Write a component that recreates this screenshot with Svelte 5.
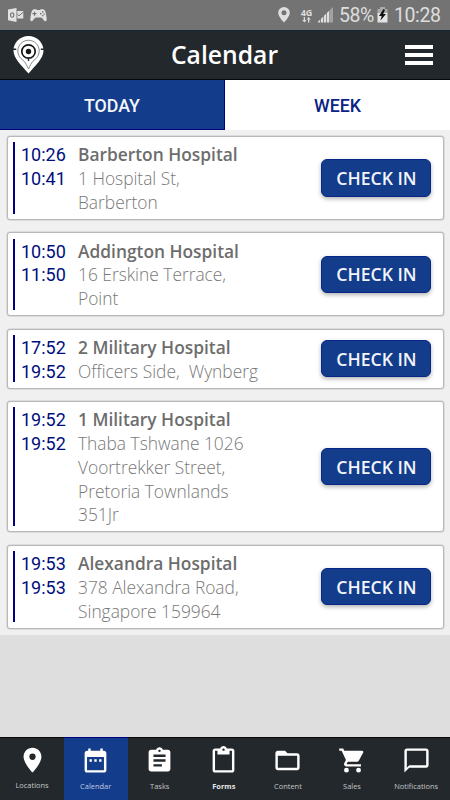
<script>
  const visits = [
    { from: '10:26', to: '10:41', name: 'Barberton Hospital', lines: ['1 Hospital St,', 'Barberton'] },
    { from: '10:50', to: '11:50', name: 'Addington Hospital', lines: ['16 Erskine Terrace,', 'Point'] },
    { from: '17:52', to: '19:52', name: '2 Military Hospital', lines: ['Officers Side,\u00a0 Wynberg'] },
    { from: '19:52', to: '19:52', name: '1 Military Hospital', lines: ['Thaba Tshwane 1026', 'Voortrekker Street,', 'Pretoria Townlands', '351Jr'] },
    { from: '19:53', to: '19:53', name: 'Alexandra Hospital', lines: ['378 Alexandra Road,', 'Singapore 159964'] }
  ];
  const nav = [
    { label: 'Locations', d: 'M12 1.500C7.900 1.500 4.600 4.800 4.600 8.900c0 5.300 7.400 13.100 7.400 13.100s7.400-7.800 7.400-13.100c0-4.100-3.300-7.400-7.400-7.400zm0 10a2.600 2.600 0 1 1 0-5.200 2.600 2.600 0 0 1 0 5.200z' },
    { label: 'Calendar', active: true, d: 'M9 11H7v2h2v-2zm4 0h-2v2h2v-2zm4 0h-2v2h2v-2zm2-7h-1V2h-2v2H8V2H6v2H5c-1.1 0-2 .9-2 2v14c0 1.1.9 2 2 2h14c1.1 0 2-.9 2-2V6c0-1.1-.9-2-2-2zm0 16H5V9h14v11z' },
    { label: 'Tasks', d: 'M19 3h-4.18C14.4 1.84 13.3 1 12 1s-2.4.84-2.82 2H5c-1.1 0-2 .9-2 2v14c0 1.1.9 2 2 2h14c1.1 0 2-.9 2-2V5c0-1.1-.9-2-2-2zm-7 0a1 1 0 1 1 0 2 1 1 0 0 1 0-2zm2 14H7v-2h7v2zm3-4H7v-2h10v2zm0-4H7V7h10v2z' },
    { label: 'Forms', bold: true, d: 'M19 2h-4.18C14.4.84 13.3 0 12 0S9.6.84 9.18 2H5c-1.1 0-2 .9-2 2v16c0 1.1.9 2 2 2h14c1.1 0 2-.9 2-2V4c0-1.1-.9-2-2-2zm-7 0a1 1 0 1 1 0 2 1 1 0 0 1 0-2zm7 18H5V4h2v3h10V4h2v16z' },
    { label: 'Content', d: 'M10 4H4c-1.1 0-2 .9-2 2v12c0 1.1.9 2 2 2h16c1.1 0 2-.9 2-2V8c0-1.1-.9-2-2-2h-8l-2-2zM20 18H4V8h16v10z' },
    { label: 'Sales', d: 'M7 18a2 2 0 1 0 0 4 2 2 0 0 0 0-4zM1 2v2h2l3.6 7.59-1.35 2.45C4.52 15.37 5.48 17 7 17h12v-2H7.42a.25.25 0 0 1-.25-.25l.93-1.75h7.45c.75 0 1.41-.41 1.75-1.03l3.58-6.49A1 1 0 0 0 20 4H5.21l-.94-2H1zm16 16a2 2 0 1 0 0 4 2 2 0 0 0 0-4z' },
    { label: 'Notifications', d: 'M20 2H4c-1.1 0-2 .9-2 2v18l4-4h14c1.1 0 2-.9 2-2V4c0-1.1-.9-2-2-2zm0 14H6l-2 2V4h16v12z' }
  ];
</script>

<div class="screen">
  <div class="status">
    <svg class="mail" width="16" height="14" viewBox="0 0 16 14" fill="#e2e2e2">
      <path fill-rule="evenodd" d="M0 1.6 8.5 0v14L0 12.2zM4.2 4.2C2.7 4.2 2 5.4 2 7s.8 2.8 2.2 2.8S6.4 8.600 6.400 7 5.600 4.200 4.200 4.200zm0 1.100c.7 0 1 .7 1 1.700s-.3 1.700-1 1.700-1-.7-1-1.700.3-1.700 1-1.700z" />
      <path d="M9.300 3h6v7.500h-6z" /><path d="M9.300 6.200 11 7.800 15.300 4" fill="none" stroke="#737373" />
    </svg>
    <svg width="17" height="13" viewBox="0 0 17 13">
      <path fill="#e2e2e2" d="M4 .3h2.300l.6.8h3.200l.6-.8H13c1.800 0 2.500 2.400 3 5 .7 3.300 1.300 7-.6 7-1.500 0-2.700-3.800-4.500-3.800H6.100c-1.800 0-3 3.800-4.500 3.800-1.900 0-1.300-3.700-.6-7 .5-2.600 1.200-5 3-5z" />
      <path d="M4.500 2.700v4M2.500 4.700h4" stroke="#737373" stroke-width="1.200" />
      <path fill="#737373" d="M10 4h1.400v1.400H10zM12 2.300h1.400v1.400H12zM13.500 4.400h1.300v1.300h-1.300zM12 6h1.400v1.300H12z" />
    </svg>
    <div class="fill"></div>
    <svg class="place" width="12" height="16" viewBox="0 0 12 16"><path fill="#dedede" fill-rule="evenodd" d="M6 0a5.800 5.800 0 0 0-5.800 5.900C.2 9.500 6 15.500 6 15.500s5.800-6 5.800-9.600A5.800 5.800 0 0 0 6 0zm0 3.200a2.500 2.500 0 1 1 0 5 2.500 2.500 0 0 1 0-5z" /></svg>
    <div class="net"><span>4G</span><svg width="9" height="6" viewBox="0 0 9 6" fill="#dedede"><path d="M1.700 0h1.300v3h1.400L2.400 5.600.3 3h1.400zM6 5.600V2.600H4.600L6.700 0l2 2.600H7.300v3z" /></svg></div>
    <svg class="signal" width="15" height="16" viewBox="0 0 15 16"><path fill="#dedede" d="M0 14.500 2.200 12.500v3H0zM3 11.700l2.300-2.300v6.100H3zM6 8.700l2.300-2.300v9.100H6zM9 5.700l2.300-2.300v12.100H9z" /><path fill="#a2a2a2" d="M11.800 2.900 15 0v15.500h-3.200z" /></svg>
    <span class="pct">58%</span>
    <svg class="battery" width="11" height="16" viewBox="0 0 11 16"><path fill="#aaa" d="M3 0h5v2h2.500v5H.5V2H3z" /><path fill="#e4e4e4" d="M.5 6h10v9.500H.5z" /><path fill="#111" d="M6.500 2 2 9h2.700L3.300 13.700 9 6.900H6.200L8 3z" /></svg>
    <span class="clock">10:28</span>
  </div>

  <header>
    <svg class="logo" width="31" height="38" viewBox="0 0 31 38">
      <path fill="#fff" d="M15.500 0C7 0 .5 6.600.5 14.500.5 22.500 9 30 15.500 37.500 22 30 30.500 22.500 30.500 14.500 30.500 6.600 24 0 15.500 0z" />
      <path d="M15.500 4.300C9.500 4.300 4.800 9 4.800 15c0 4.500 2.600 7.300 5.200 9.300 2.800 2 4 5.800 5.500 8.700 1.500-2.900 2.700-6.700 5.500-8.700 2.600-2 5.200-4.800 5.200-9.300 0-6-4.700-10.700-10.700-10.700z" fill="none" stroke="#7b7d7e" stroke-width=".9" />
      <circle cx="15.500" cy="15.500" r="6.700" fill="none" stroke="#161819" stroke-width="1.700" />
      <circle cx="15.500" cy="15.500" r="2.700" fill="#161819" />
      <path d="M0 13.300h3.200M27.800 13.300H31M15.500 22v3" stroke="#22282c" stroke-width="1.400" />
    </svg>
    <h1>Calendar</h1>
    <div class="menu"><i></i><i></i><i></i></div>
  </header>

  <div class="tabs"><div class="tab on">TODAY</div><div class="tab">WEEK</div></div>

  <main>
    {#each visits as v}
      <article>
        <div class="times"><div>{v.from}</div><div>{v.to}</div></div>
        <div class="info">
          <div class="name">{v.name}</div>
          {#each v.lines as line}<div class="line">{line}</div>{/each}
        </div>
        <button>CHECK IN</button>
      </article>
    {/each}
  </main>
  <div class="rest"></div>

  <nav>
    {#each nav as n}
      <div class="item" class:active={n.active} class:bold={n.bold} class:first={n.label === 'Locations'}>
        <svg width="29" height="29" viewBox="0 0 24 24"><path fill="#fff" fill-rule="evenodd" d={n.d} /></svg>
        <span>{n.label}</span>
      </div>
    {/each}
  </nav>
</div>

<style>
  :global(body) { margin: 0; }
  .screen { width: 450px; height: 800px; display: flex; flex-direction: column; overflow: hidden; background: #dedede; font-family: "Open Sans", sans-serif; }
  .status { height: 30px; flex: none; box-sizing: border-box; background: #737373; display: flex; align-items: center; padding: 0 10px 0 8px; color: #dedede; font-family: Roboto, sans-serif; font-size: 19.500px; line-height: 31px; white-space: nowrap; }
  .mail { margin-right: 6px; }
  .fill { flex: 1; }
  .place { margin-right: 10px; }
  .net { width: 13px; display: flex; flex-direction: column; align-items: center; font: 700 9px/9px "Open Sans", sans-serif; margin-right: 5px; }
  .signal { margin-right: 6px; }
  .pct { width: 34px; letter-spacing: -.4px; margin-right: 4px; }
  .battery { margin-right: 6px; }
  .clock { width: 46px; letter-spacing: -.4px; }
  .pct, .clock { padding-top: 1px; }
  header { height: 50px; flex: none; box-sizing: border-box; background: #23282c; border-top: 1px solid #152633; border-bottom: 1px solid #08090a; display: flex; align-items: center; padding: 0 17px 0 13px; }
  .logo { flex: none; }
  h1 { flex: 1; margin: 0; text-align: center; color: #fff; font-size: 24.700px; font-weight: 600; line-height: 48px; }
  .menu { width: 28px; display: flex; flex-direction: column; gap: 4px; }
  .menu i { height: 4px; background: #fff; }
  .tabs { height: 50px; flex: none; display: flex; background: #fff; }
  .tab { width: 225px; flex: none; box-sizing: border-box; text-align: center; font: 500 17.800px/51px Roboto, sans-serif; color: #0b2384; }
  .tab.on { background: #133c8b; border: 1px solid #000080; border-left: 0; border-top: 0; color: #f4f6fa; }
  main { height: 505px; flex: none; box-sizing: border-box; background: #f0f0f0; padding: 6.300px 6.500px 0; display: flex; flex-direction: column; gap: 12.400px; }
  article { flex: none; box-sizing: border-box; border: 1px solid #b9b9b9; border-radius: 3px; box-shadow: 0 0 0 .5px #c8c8c8; background: #fff; display: flex; padding: 5.130px 11.500px 5.130px 5px; line-height: 23.850px; font-size: 18px; }
  .times { border-left: 2.500px solid #000080; width: 57px; padding-left: 6.500px; color: #000f80; font-family: Roboto, sans-serif; flex: none; }
  .times div { position: relative; top: 1px; }
  .info { flex: 1; white-space: nowrap; color: #787878; font-weight: 300; font-size: 17.350px; }
  .info div { position: relative; top: 1px; }
  .info .name { font-weight: 600; color: #6d6d6d; }
  button { align-self: center; width: 110px; height: 37.500px; margin: 0; padding: 0 0 0 1px; border: 1px solid #08268a; border-radius: 6px; background: #133c8b; color: #f2f5fa; font: 600 17.600px/34px "Open Sans", sans-serif; box-shadow: 0 2px 4px rgba(0,0,0,.3); }
  .rest { flex: 1; }
  nav { height: 63px; flex: none; background: #23282c; display: flex; box-shadow: inset 0 1px #08090a; padding-right: 1px; }
  .item { width: 64.100px; flex: none; display: flex; flex-direction: column; align-items: center; padding-top: 9px; color: #c4c6c7; font-size: 7.450px; line-height: 12px; }
  .item svg { flex: none; margin-bottom: 5px; }
  .item.first svg { margin-bottom: 4px; }
  .item:nth-child(n+2) { position: relative; left: -.5px; }
  .item.active { background: #133c8b; box-shadow: inset 0 1px #000080; color: #c0cae0; }
  .item.bold { font-weight: 700; color: #e6e6e6; }
</style>
